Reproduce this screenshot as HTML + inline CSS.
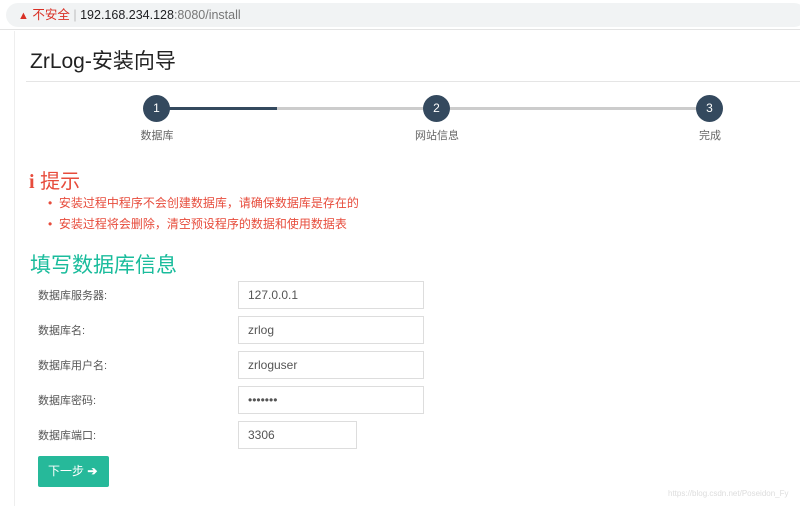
<!DOCTYPE html>
<html><head><meta charset="utf-8"><style>
*{box-sizing:border-box;margin:0;padding:0}
body{width:800px;height:506px;overflow:hidden;background:#fff;font-family:"Liberation Sans","Noto Sans CJK SC",sans-serif;position:relative}
.bar{position:absolute;left:0;top:0;width:800px;height:30px;background:#fff;border-bottom:1px solid #e3e3e3}
.url{position:absolute;left:6px;top:3px;width:800px;height:24px;background:#f1f3f4;border-radius:12px;font-size:12.5px;line-height:24px;padding-left:12px;color:#202124}
.abs{position:absolute}
.side{position:absolute;left:14px;top:31px;width:1px;height:475px;background:#eee}
.circle{position:absolute;width:27px;height:27px;border-radius:50%;background:#34495e;color:#fff;font-size:12px;text-align:center;line-height:27px}
.lbl{position:absolute;font-size:11px;color:#666;width:80px;text-align:center}
.flabel{position:absolute;left:38px;font-size:11px;color:#555}
.inp{position:absolute;left:238px;width:186px;height:28px;border:1px solid #ddd;font-size:12px;color:#555;padding-left:9px;line-height:26px}
</style></head><body>
<div class="bar"><div class="url"><span style="color:#d93025;font-size:11px">▲</span> <span style="color:#d93025">不安全</span> <span style="color:#bbb">|</span> 192.168.234.128<span style="color:#777">:8080/install</span></div></div>
<div class="side"></div>
<div class="abs" style="left:30px;top:45px;font-size:21px;color:#222">ZrLog-安装向导</div>
<div class="abs" style="left:26px;top:81px;width:774px;height:1px;background:#e5e5e5"></div>
<div class="abs" style="left:157px;top:107px;width:120px;height:3px;background:#34495e"></div>
<div class="abs" style="left:277px;top:107px;width:433px;height:3px;background:#ccc"></div>
<div class="circle" style="left:143px;top:95px">1</div>
<div class="circle" style="left:423px;top:95px">2</div>
<div class="circle" style="left:696px;top:95px">3</div>
<div class="lbl" style="left:117px;top:127px">数据库</div>
<div class="lbl" style="left:397px;top:127px">网站信息</div>
<div class="lbl" style="left:670px;top:127px">完成</div>
<div class="abs" style="left:29px;top:165px;font-size:20px;color:#e74c3c"><b style="font-family:'Liberation Serif',serif">i</b> 提示</div>
<div class="abs" style="left:48px;top:193px;font-size:12px;color:#e74c3c;line-height:21px">
<div>•&nbsp; 安装过程中程序不会创建数据库，请确保数据库是存在的</div>
<div>•&nbsp; 安装过程将会删除，清空预设程序的数据和使用数据表</div></div>
<div class="abs" style="left:30px;top:249px;font-size:21px;color:#1abc9c">填写数据库信息</div>
<div class="flabel" style="top:287px">数据库服务器:</div><div class="inp" style="top:281px">127.0.0.1</div>
<div class="flabel" style="top:322px">数据库名:</div><div class="inp" style="top:316px">zrlog</div>
<div class="flabel" style="top:357px">数据库用户名:</div><div class="inp" style="top:351px">zrloguser</div>
<div class="flabel" style="top:392px">数据库密码:</div><div class="inp" style="top:386px">•••••••</div>
<div class="flabel" style="top:427px">数据库端口:</div><div class="inp" style="top:421px;width:119px">3306</div>
<div class="abs" style="left:38px;top:456px;width:71px;height:31px;background:#26b99a;border-radius:2px;color:#fff;font-size:12px;line-height:31px;padding-left:10px">下一步 <b>➔</b></div>
<div class="abs" style="left:668px;top:489px;font-size:8px;color:#ddd">https://blog.csdn.net/Poseidon_Fy</div>
</body></html>
